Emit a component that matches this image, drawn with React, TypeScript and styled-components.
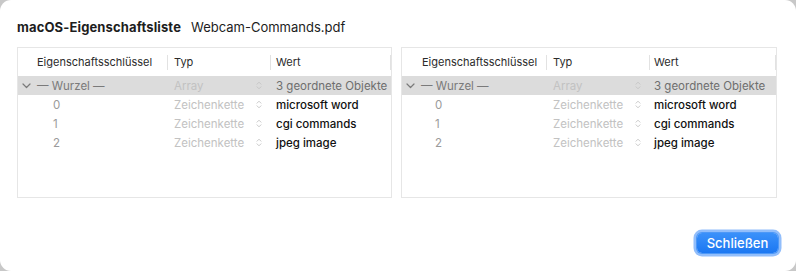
import React from "react";
import styled, { createGlobalStyle } from "styled-components";

const Global = createGlobalStyle`
  html, body { margin: 0; padding: 0; background: #c8c8c8; }
  body { font-family: Inter, "Noto Sans", "Liberation Sans", sans-serif; }
`;

const Window = styled.div`
  width: 796px;
  height: 271px;
  box-sizing: border-box;
  background: #ffffff;
  border-radius: 11px;
  padding: 19px 19px 0 17px;
  display: flex;
  flex-direction: column;
  overflow: hidden;
`;

const TitleBar = styled.div`
  display: flex;
  align-items: baseline;
  gap: 10px;
  height: 28px;
  font-size: 13px;
  color: #1d1d1d;
`;

const TitleStrong = styled.span`
  font-weight: 700;
  letter-spacing: 0.13px;
`;

const TitleFile = styled.span`
  font-weight: 400;
`;

const Panels = styled.div`
  display: flex;
  gap: 9px;
`;

const Table = styled.div<{ $width: number }>`
  width: ${(p) => p.$width}px;
  height: 151px;
  box-sizing: border-box;
  border: 1px solid #e6e6e6;
  display: flex;
  flex-direction: column;
`;

const Row = styled.div<{ $key: number; $selected?: boolean; $height: number }>`
  display: grid;
  grid-template-columns: ${(p) => p.$key}px 103px 1fr;
  height: ${(p) => p.$height}px;
  align-items: center;
  background: ${(p) => (p.$selected ? "#dcdcdc" : "transparent")};
  font-size: 11.5px;
`;

const HeaderCell = styled.div<{ $pad: number; $sep?: boolean }>`
  position: relative;
  padding-left: ${(p) => p.$pad}px;
  color: #2b2b2b;
  font-size: 11px;
  height: 100%;
  display: flex;
  align-items: center;
  margin-top: -1px;
  &::after {
    content: "";
    display: ${(p) => (p.$sep ? "block" : "none")};
    position: absolute;
    right: 0;
    top: 7px;
    bottom: 6px;
    width: 1px;
    background: #e2e2e2;
  }
`;

const KeyCell = styled.div<{ $pad: number; $tone: "root" | "index" }>`
  padding-left: ${(p) => p.$pad}px;
  display: flex;
  align-items: center;
  gap: 6px;
  color: ${(p) => (p.$tone === "root" ? "#7a7a7a" : "#9a9a9a")};
`;

const TypeCell = styled.div<{ $pad: number }>`
  padding-left: ${(p) => p.$pad}px;
  padding-right: 9px;
  display: flex;
  align-items: center;
  justify-content: space-between;
  color: #c2c2c2;
`;

const ValueCell = styled.div<{ $pad: number; $root?: boolean }>`
  padding-left: ${(p) => p.$pad}px;
  color: ${(p) => (p.$root ? "#6e6e6e" : "#111111")};
  font-weight: ${(p) => (p.$root ? 400 : 500)};
  white-space: nowrap;
`;

const Footer = styled.div`
  flex: 1;
  display: flex;
  justify-content: flex-end;
  align-items: flex-start;
  padding-top: 35px;
`;

const Button = styled.button`
  width: 81px;
  height: 20px;
  margin-right: -1px;
  border: none;
  border-radius: 5px;
  background: linear-gradient(#3b91fa, #1b77f2);
  color: #ffffff;
  font-family: Inter, "Noto Sans", "Liberation Sans", sans-serif;
  font-size: 13px;
  font-weight: 500;
  padding: 0;
  box-shadow: 0 0 0 1px #4d98f7, 0 0 0 3.5px rgba(110, 168, 250, 0.75);
`;

const Chevron = () => (
  <svg width="9" height="6" viewBox="0 0 9 6">
    <path d="M1 1 L4.5 4.5 L8 1" fill="none" stroke="#7a7a7a" strokeWidth="1.2" strokeLinecap="round" strokeLinejoin="round" />
  </svg>
);

const Stepper = () => (
  <svg width="6" height="9" viewBox="0 0 6 9">
    <path d="M1 3.2 L3 1.2 L5 3.2 M1 5.8 L3 7.8 L5 5.8" fill="none" stroke="#c4c4c4" strokeWidth="0.9" strokeLinecap="round" strokeLinejoin="round" />
  </svg>
);

type Layout = { width: number; key: number; headPad: number; rootPad: number; idxPad: number; typePad: number; valPad: number };

const items = ["microsoft word", "cgi commands", "jpeg image"];

const PlistTable = ({ l }: { l: Layout }) => (
  <Table $width={l.width}>
    <Row $key={l.key} $height={28}>
      <HeaderCell $pad={l.headPad} $sep>Eigenschaftsschlüssel</HeaderCell>
      <HeaderCell $pad={l.typePad} $sep>Typ</HeaderCell>
      <HeaderCell $pad={l.valPad} $sep>Wert</HeaderCell>
    </Row>
    <Row $key={l.key} $height={19} $selected>
      <KeyCell $pad={l.rootPad} $tone="root">
        <Chevron />
        <span>— Wurzel —</span>
      </KeyCell>
      <TypeCell $pad={l.typePad}>
        <span>Array</span>
        <Stepper />
      </TypeCell>
      <ValueCell $pad={l.valPad} $root>3 geordnete Objekte</ValueCell>
    </Row>
    {items.map((v, i) => (
      <Row key={v} $key={l.key} $height={19}>
        <KeyCell $pad={l.idxPad} $tone="index">{i}</KeyCell>
        <TypeCell $pad={l.typePad}>
          <span>Zeichenkette</span>
          <Stepper />
        </TypeCell>
        <ValueCell $pad={l.valPad}>{v}</ValueCell>
      </Row>
    ))}
  </Table>
);

const left: Layout = { width: 376, key: 150, headPad: 19, rootPad: 4, idxPad: 35, typePad: 6, valPad: 5 };
const right: Layout = { width: 377, key: 145, headPad: 20, rootPad: 4, idxPad: 33, typePad: 6, valPad: 4 };

export default function App() {
  return (
    <>
      <Global />
      <Window>
        <TitleBar>
          <TitleStrong>macOS-Eigenschaftsliste</TitleStrong>
          <TitleFile>Webcam-Commands.pdf</TitleFile>
        </TitleBar>
        <Panels>
          <PlistTable l={left} />
          <PlistTable l={right} />
        </Panels>
        <Footer>
          <Button>Schließen</Button>
        </Footer>
      </Window>
    </>
  );
}
